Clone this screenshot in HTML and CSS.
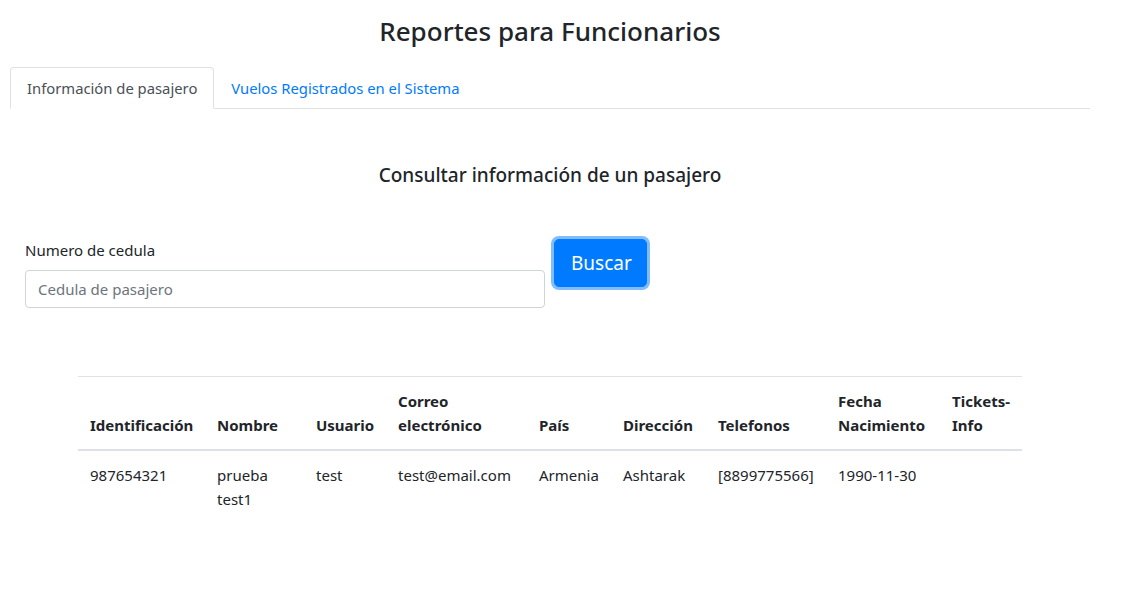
FILE: index.html
```html
<!DOCTYPE html>
<html lang="es">
<head>
<meta charset="utf-8">
<title>Reportes para Funcionarios</title>
<link rel="stylesheet" href="styles.css">
</head>
<body>
<div class="page">
  <h3 class="title">Reportes para Funcionarios</h3>
  <ul class="tabs">
    <li><a class="tab active" href="#">Información de pasajero</a></li>
    <li><a class="tab" href="#">Vuelos Registrados en el Sistema</a></li>
  </ul>
  <div class="pane">
    <h5 class="subtitle">Consultar información de un pasajero</h5>
    <form class="search">
      <div class="field">
        <label class="label" for="ced">Numero de cedula</label>
        <input class="input" id="ced" type="text" placeholder="Cedula de pasajero">
      </div>
      <button class="btn" type="button">Buscar</button>
    </form>
    <table class="table">
      <colgroup>
        <col class="c1"><col class="c2"><col class="c3"><col class="c4"><col class="c5"><col class="c6"><col class="c7"><col class="c8"><col class="c9">
      </colgroup>
      <thead>
        <tr>
          <th>Identificación</th>
          <th>Nombre</th>
          <th>Usuario</th>
          <th>Correo electrónico</th>
          <th>País</th>
          <th>Dirección</th>
          <th>Telefonos</th>
          <th>Fecha Nacimiento</th>
          <th>Tickets-Info</th>
        </tr>
      </thead>
      <tbody>
        <tr>
          <td>987654321</td>
          <td>prueba test1</td>
          <td>test</td>
          <td>test@email.com</td>
          <td>Armenia</td>
          <td>Ashtarak</td>
          <td>[8899775566]</td>
          <td>1990-11-30</td>
          <td></td>
        </tr>
      </tbody>
    </table>
  </div>
</div>
</body>
</html>
```
FILE: styles.css
```css
* { box-sizing: border-box; }
html, body { margin: 0; padding: 0; background: #fff; }
body {
  font-family: "Noto Sans", "Open Sans", "Liberation Sans", sans-serif;
  font-size: 15px;
  line-height: 24px;
  color: #212529;
}
.page {
  width: 1080px;
  margin-left: 10px;
}
.title {
  margin: 0;
  padding-top: 14px;
  height: 67px;
  font-size: 26px;
  line-height: 34px;
  font-weight: 500;
  text-align: center;
}
.tabs {
  list-style: none;
  margin: 0;
  padding: 0;
  display: flex;
  border-bottom: 1px solid #dee2e6;
}
.tabs li { margin-bottom: -1px; }
.tab {
  display: block;
  padding: 8px 16px;
  border: 1px solid transparent;
  border-top-left-radius: 4px;
  border-top-right-radius: 4px;
  color: #007bff;
  text-decoration: none;
  font-size: 14.8px;
  line-height: 24px;
}
.tab.active {
  color: #495057;
  border-color: #dee2e6 #dee2e6 #fff;
  background: #fff;
}
.pane {
  padding-top: 51px;
}
.subtitle {
  margin: 0;
  font-size: 19px;
  line-height: 30px;
  font-weight: 500;
  text-align: center;
}
.search {
  display: flex;
  align-items: flex-start;
  gap: 9px;
  margin-top: 48px;
  padding-left: 15px;
}
.field {
  width: 520px;
}
.label {
  display: block;
  margin-bottom: 8px;
}
.input {
  display: block;
  width: 100%;
  height: 38px;
  padding: 6px 12px;
  font: inherit;
  color: #495057;
  border: 1px solid #ced4da;
  border-radius: 4px;
  background: #fff;
}
.input::placeholder { color: #6c757d; }
.btn {
  font: inherit;
  font-size: 19px;
  line-height: 30px;
  padding: 8px 16px;
  margin-top: 1px;
  width: 93px;
  color: #fff;
  background: #007bff;
  border: 1px solid #007bff;
  border-radius: 5px;
  box-shadow: 0 0 0 3px rgba(0, 123, 255, 0.5);
  cursor: pointer;
}
.table {
  width: 944px;
  margin: 68px 0 0 68px;
  border-collapse: collapse;
  table-layout: fixed;
}
.c1 { width: 127px; }
.c2 { width: 99px; }
.c3 { width: 82px; }
.c4 { width: 141px; }
.c5 { width: 84px; }
.c6 { width: 95px; }
.c7 { width: 120px; }
.c8 { width: 114px; }
.c9 { width: 82px; }
.table th, .table td {
  padding: 12px;
  text-align: left;
  vertical-align: top;
  border-top: 1px solid #dee2e6;
}
.table th {
  vertical-align: bottom;
  font-weight: 700;
  border-bottom: 2px solid #dee2e6;
}
.table td { border-top: none; }
```
